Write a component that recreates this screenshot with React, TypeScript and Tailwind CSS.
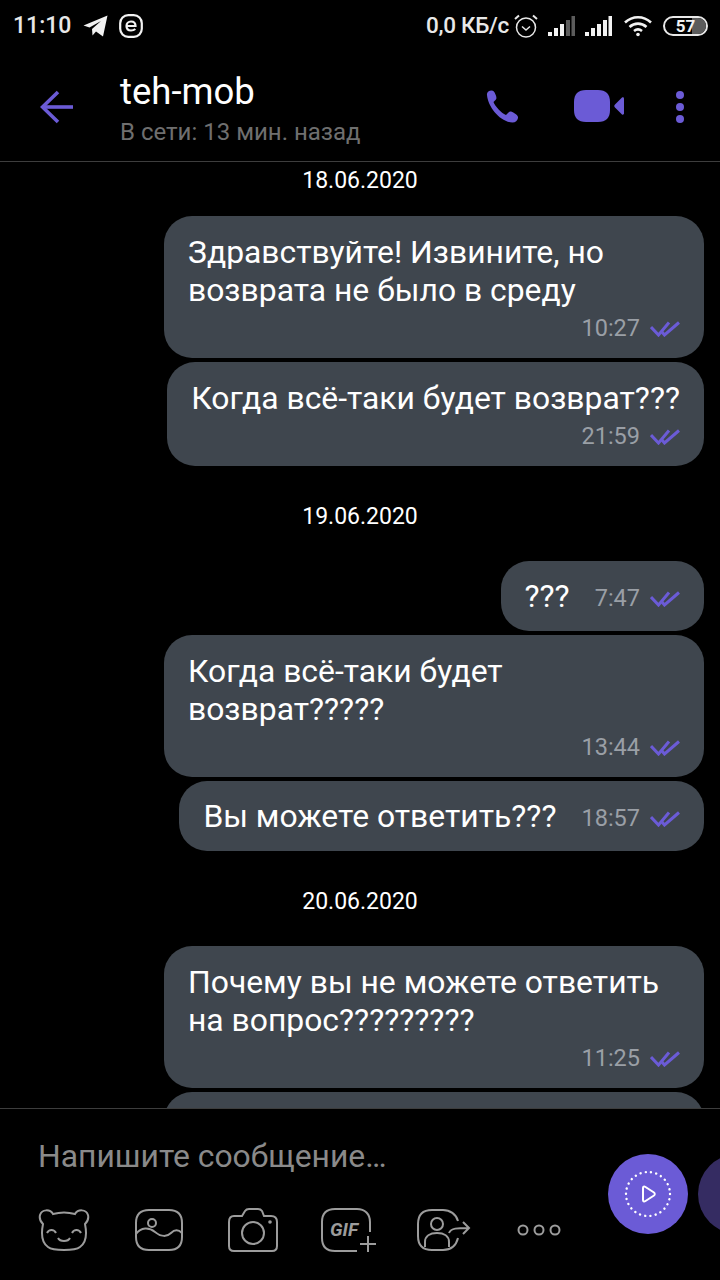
const purple = "#6b5bd6";

function DoubleCheck() {
  return (
    <svg width="30" height="16" viewBox="0 0 30 16" fill="none" stroke={purple} strokeWidth="3">
      <path d="M1 6 L8.5 14 L19 1.5" />
      <path d="M11.5 10.5 L14.5 14 L29 1.5" />
    </svg>
  );
}

function DateLabel({ text, first }: { text: string; first?: boolean }) {
  return (
    <div
      className={
        first
          ? "w-full h-9 pt-[2px] mb-[14px] flex items-center justify-center text-white text-[23px] shrink-0"
          : "w-full h-9 mt-[29px] mb-[22px] flex items-center justify-center text-white text-[23px] shrink-0"
      }
    >
      {text}
    </div>
  );
}

function Bubble({ lines, time }: { lines: string[]; time: string }) {
  return (
    <div
      className={
        lines.length > 1
          ? "w-[540px] mr-4 bg-[#3f464e] rounded-[28px] px-6 pt-[17px] pb-[11px] shrink-0"
          : "mr-4 bg-[#3f464e] rounded-[28px] px-6 pt-[17px] pb-[11px] shrink-0"
      }
    >
      {lines.map((l) => (
        <div key={l} className="text-white text-[31.85px] leading-[38px] whitespace-nowrap">
          {l}
        </div>
      ))}
      <div className="flex items-center justify-end gap-[10px] h-[38px] pt-[2px]">
        <span className="text-[#9a9fa6] text-[23.5px]">{time}</span>
        <DoubleCheck />
      </div>
    </div>
  );
}

function InlineBubble({ text, time }: { text: string; time: string }) {
  return (
    <div className="mr-4 bg-[#3f464e] rounded-[28px] px-6 h-[70px] flex items-center shrink-0">
      <span className="text-white text-[31.85px] leading-[38px] whitespace-nowrap mr-[25px]">{text}</span>
      <span className="text-[#9a9fa6] text-[23.5px] mr-[10px] mt-[6px]">{time}</span>
      <div className="mt-[6px]">
        <DoubleCheck />
      </div>
    </div>
  );
}

function StatusBar() {
  return (
    <div className="h-[52px] shrink-0 flex items-center pl-[13px] text-[#e8e8e8] font-medium">
      <span className="text-[23px]">11:10</span>
      <svg className="ml-[12px]" width="25" height="22" viewBox="0 0 25 22" fill="#f2f2f2">
        <path d="M24.5 0.5 L20 21.5 L13 16.5 L9.5 20.5 L9 14 L18 6 L6.5 12.5 L0.5 10.5Z" />
      </svg>
      <svg className="ml-[11px]" width="24" height="24" viewBox="0 0 24 24" fill="none" stroke="#f2f2f2" strokeWidth="2.2">
        <rect x="1.2" y="1.2" width="21.6" height="21.6" rx="8" />
        <path d="M7.5 12 H16.5 C16.5 9 14.5 7.5 12 7.5 C9.5 7.5 7.5 9.5 7.5 12 C7.5 15 9.5 16.5 12 16.5 C13.8 16.5 15.2 16 16.3 15" />
      </svg>
      <span className="ml-auto text-[22.5px] tracking-[-0.3px]">0,0 КБ/с</span>
      <svg className="ml-[5px]" width="24" height="24" viewBox="0 0 24 24" fill="none" stroke="#e8e8e8" strokeWidth="1.5">
        <circle cx="12" cy="13.5" r="9.5" />
        <path d="M8 12.5 L12 16 L16 12.5" />
        <path d="M1 5 L5 1.5 M23 5 L19 1.5" strokeWidth="2" />
      </svg>
      <svg className="ml-[10px]" width="27" height="22" viewBox="0 0 27 22">
        <rect x="0" y="17" width="4" height="4" fill="#f2f2f2" />
        <rect x="6" y="13" width="4" height="8" fill="#f2f2f2" />
        <rect x="12" y="9" width="4" height="12" fill="#f2f2f2" />
        <rect x="18" y="5" width="4" height="16" fill="#5c5c5c" />
        <rect x="23.5" y="1" width="3.5" height="20" fill="#5c5c5c" />
      </svg>
      <svg className="ml-[10px]" width="27" height="22" viewBox="0 0 27 22" fill="#f2f2f2">
        <rect x="0" y="17" width="4" height="4" />
        <rect x="6" y="13" width="4" height="8" />
        <rect x="12" y="9" width="4" height="12" />
        <rect x="18" y="5" width="4" height="16" />
        <rect x="23.5" y="1" width="3.5" height="20" />
      </svg>
      <svg className="ml-3" width="28" height="22" viewBox="0 0 28 22" fill="none" stroke="#f2f2f2" strokeWidth="2.6">
        <path d="M1 7.5 C8.5 0.5 19.5 0.5 27 7.5" />
        <path d="M5.5 12 C10.5 7.5 17.5 7.5 22.5 12" />
        <path d="M10 16 C12.5 14 15.5 14 18 16" />
        <circle cx="14" cy="19.5" r="1.8" fill="#f2f2f2" stroke="none" />
      </svg>
      <div className="relative ml-[11px] mr-3 w-[45px] h-[20px] rounded-full border-2 border-[#e8e8e8] overflow-hidden flex items-center justify-center">
        <div className="absolute right-0 top-0 bottom-0 w-[14px] bg-[#5c5c5c]" />
        <span className="relative text-[17px] leading-none font-bold text-[#f2f2f2]">57</span>
      </div>
    </div>
  );
}

function Header() {
  return (
    <div className="h-[110px] shrink-0 border-b border-[#3d3d3d] flex items-start pl-10 pr-9 pt-[38px]">
      <svg width="34" height="34" viewBox="0 0 34 34" fill="none" stroke={purple} strokeWidth="3.6">
        <path d="M33 17 H3" />
        <path d="M18 2 L2.5 17 L18 32" />
      </svg>
      <div className="ml-[46px] -mt-[20px]">
        <div className="text-white text-[36.5px] leading-[44px]">teh-mob</div>
        <div className="text-[#6f6f6f] text-2xl leading-7 mt-[4px]">В сети: 13 мин. назад</div>
      </div>
      <svg className="ml-auto" width="33" height="33" viewBox="0 0 33 33" fill={purple}>
        <path d="M1 5 C0.5 2.5 3 0.5 5.5 0.5 C7.5 0.5 8.5 2 9.5 4.5 C10.5 7 11 8.5 9.5 10 L7.5 12 C9 16 15 23 20 25 L22.5 22.5 C24 21 25.5 21.5 28 23 C30.5 24.5 32.5 26 32 28 C31.5 30.5 29.5 32.5 26.5 32.5 C14 32 2 17 1 5Z" />
      </svg>
      <svg className="ml-[55px]" width="51" height="32" viewBox="0 0 51 32" fill={purple}>
        <path d="M12 0 H24 C32 0 36 4 36 12 V20 C36 28 32 32 24 32 H12 C4 32 0 28 0 20 V12 C0 4 4 0 12 0Z" />
        <path d="M50 8.5 V23.5 C50 24.5 49 25 48 24.5 L41 17.5 C40 16.5 40 15.5 41 14.5 L48 7.5 C49 7 50 7.5 50 8.5Z" />
      </svg>
      <div className="ml-[51px] flex flex-col gap-1 pt-[1px]">
        <div className="w-2 h-2 rounded-full bg-[#6b5bd6]" />
        <div className="w-2 h-2 rounded-full bg-[#6b5bd6]" />
        <div className="w-2 h-2 rounded-full bg-[#6b5bd6]" />
      </div>
    </div>
  );
}

function Footer() {
  const line = { fill: "none", stroke: "#9c9c9c", strokeWidth: 2 };
  return (
    <div className="relative h-[172px] shrink-0 border-t border-[#3d3d3d] bg-black overflow-hidden pl-[38px]">
      <div className="text-[#8a8a8a] text-[31.85px] leading-9 mt-[29px]">Напишите сообщение…</div>
      <div className="flex items-center mt-[33px] h-[46px]">
        <svg width="52" height="46" viewBox="0 0 52 46" {...line}>
          <path d="M15 7 C12 2 4 2 2 8 C1 12 3 15 5 17 C3 27 4 36 10 40 C15 44 37 44 42 40 C48 36 49 27 47 17 C49 15 51 12 50 8 C48 2 40 2 37 7 C30 5 22 5 15 7Z" />
          <path d="M9 26 C11 22 16 22 18 26 M34 26 C36 22 41 22 43 26 M20 31 C22 35 30 35 32 31" />
        </svg>
        <svg className="ml-[45px]" width="48" height="42" viewBox="0 0 48 42" {...line}>
          <path d="M14 1 H34 C43 1 47 6 47 14 V28 C47 36 43 41 34 41 H14 C5 41 1 36 1 28 V14 C1 6 5 1 14 1Z" />
          <circle cx="17" cy="14" r="4" />
          <path d="M1 25 C6 18 14 18 20 23 C26 28 32 28 36 24 C40 20 44 21 47 24" />
        </svg>
        <svg className="ml-[45px]" width="50" height="44" viewBox="0 0 50 44" {...line}>
          <path d="M6 8 H14 L17 3 C18 1.5 19 1 21 1 H30 C32 1 33 1.5 34 3 L36 8 H43 C47 8 49 10 49 14 V38 C49 41 47 43 44 43 H6 C3 43 1 41 1 38 V14 C1 10 3 8 6 8Z" />
          <circle cx="25" cy="25" r="11" />
          <circle cx="42" cy="14" r="1.8" fill="#9c9c9c" stroke="none" />
        </svg>
        <svg className="ml-[43px]" width="56" height="44" viewBox="0 0 56 44" {...line}>
          <path d="M36 43 H14 C5 43 1 38 1 30 V14 C1 6 5 1 14 1 H36 C44 1 49 6 49 14 V24" />
          <path d="M47 28 V44 M39 36 H55" />
          <text x="9" y="28" fill="#9c9c9c" stroke="none" fontSize="19" fontWeight="700" fontStyle="italic" fontFamily="Roboto, sans-serif">GIF</text>
        </svg>
        <svg className="ml-[40px]" width="54" height="42" viewBox="0 0 54 42" {...line}>
          <path d="M41 12 C39 5 33 1 26 1 H15 C6 1 1 6 1 15 V27 C1 36 6 41 15 41 H26 C34 41 39 37 41 29" />
          <circle cx="20" cy="15" r="6" />
          <path d="M8 38 V33 C8 27 13 24 20 24 C27 24 32 27 32 33 V38" />
          <path d="M32 24 C34 19 40 19 52 19 M46 13 L52 19 L46 25" />
        </svg>
        <svg className="ml-[46px]" width="44" height="12" viewBox="0 0 44 12" {...line}>
          <circle cx="6" cy="6" r="4.5" />
          <circle cx="22" cy="6" r="4.5" />
          <circle cx="38" cy="6" r="4.5" />
        </svg>
      </div>
      {/* send buttons float over the input bar */}
      <div className="absolute left-[608px] top-[45px] w-20 h-20 rounded-full bg-[#6b5bd6] flex items-center justify-center">
        <svg width="48" height="48" viewBox="0 0 48 48" fill="none" stroke="#fff">
          <circle cx="24" cy="24" r="22" strokeWidth="2.4" strokeDasharray="0.1 5.2" strokeLinecap="round" />
          <path d="M19 18 C19 16.5 20 16 21.5 17 L30 22.5 C31 23.2 31 24.8 30 25.5 L21.5 31 C20 32 19 31.5 19 30Z" strokeWidth="2" />
        </svg>
      </div>
      <div className="absolute left-[698px] top-[45px] w-20 h-20 rounded-full bg-[#352c62]" />
    </div>
  );
}

export default function App() {
  return (
    <div
      className="w-[720px] h-[1280px] bg-black flex flex-col overflow-hidden"
      style={{ fontFamily: "Roboto, sans-serif" }}
    >
      <StatusBar />
      <Header />
      <div className="flex-1 min-h-0 overflow-hidden flex flex-col items-end gap-1">
        <DateLabel text="18.06.2020" first />
        <Bubble lines={["Здравствуйте! Извините, но", "возврата не было в среду"]} time="10:27" />
        <Bubble lines={["Когда всё-таки будет возврат???"]} time="21:59" />
        <DateLabel text="19.06.2020" />
        <InlineBubble text="???" time="7:47" />
        <Bubble lines={["Когда всё-таки будет", "возврат?????"]} time="13:44" />
        <InlineBubble text="Вы можете ответить???" time="18:57" />
        <DateLabel text="20.06.2020" />
        <Bubble lines={["Почему вы не можете ответить", "на вопрос?????????"]} time="11:25" />
        <div className="w-[540px] mr-4 h-20 bg-[#3f464e] rounded-[28px] shrink-0" />
      </div>
      <Footer />
    </div>
  );
}
